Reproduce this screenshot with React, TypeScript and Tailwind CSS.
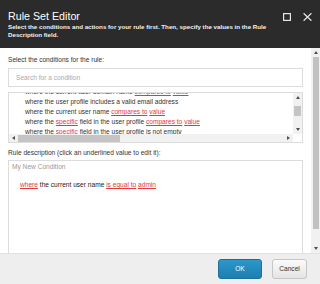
import React from "react";

function Tri({ dir, color = "#505050" }: { dir: "up" | "down" | "left" | "right"; color?: string }) {
  const pts =
    dir === "up" ? "0,3 4,3 2,0" : dir === "down" ? "0,0 4,0 2,3" : dir === "left" ? "3,0 3,4 0,2" : "0,0 0,4 3,2";
  const w = dir === "up" || dir === "down" ? 4 : 3;
  const h = dir === "up" || dir === "down" ? 3 : 4;
  return (
    <svg width={w} height={h} viewBox={`0 0 ${w} ${h}`}>
      <polygon points={pts} fill={color} />
    </svg>
  );
}

function L({ children }: { children: React.ReactNode }) {
  return <span className="text-[#e0393e] underline underline-offset-[1px]">{children}</span>;
}

const items: React.ReactNode[] = [
  <>where the current user domain name <L>compares to</L> <L>value</L></>,
  <>where the user profile includes a valid email address</>,
  <>where the current user name <L>compares to</L> <L>value</L></>,
  <>where the <L>specific</L> field in the user profile <L>compares to</L> <L>value</L></>,
  <>where the <L>specific</L> field in the user profile is not empty</>,
];

export default function App() {
  return (
    <div className="w-[320px] h-[284px] flex flex-col bg-white overflow-hidden font-['Liberation_Sans',Arial,sans-serif]">
      {/* header */}
      <header className="h-[48px] shrink-0 bg-[#2b2b2b] flex pl-[8px]">
        <div className="flex-1 pt-[10px]">
          <div className="text-[10.7px] leading-[13px] text-white">Rule Set Editor</div>
          <div className="text-[6.2px] leading-[8px] font-bold text-[#f2f2f2]">
            Select the conditions and actions for your rule first. Then, specify the values in the Rule Description field.
          </div>
        </div>
        <div className="flex items-start gap-[12px] pt-[13px] pr-[8px]">
          <svg width="8" height="8" viewBox="0 0 8 8">
            <rect x="0.6" y="0.6" width="6.8" height="6.8" fill="none" stroke="#e6e6e6" strokeWidth="1.2" />
          </svg>
          <svg width="9" height="8" viewBox="0 0 9 8">
            <path d="M0.6 0.3 L8.4 7.7 M8.4 0.3 L0.6 7.7" stroke="#e6e6e6" strokeWidth="1.3" />
          </svg>
        </div>
      </header>

      {/* body */}
      <div className="h-[205px] shrink-0 flex">
        <div className="flex-1 min-w-0 pl-[8px] pr-[8px] pt-[7px] overflow-hidden text-[6.6px] text-[#333]">
          <div className="leading-[9px]">Select the conditions for the rule:</div>

          <div className="mt-[4px] h-[19px] border border-[#dcdcdc] flex items-center pl-[7px] text-[#aaa]">
            Search for a condition
          </div>

          {/* condition list */}
          <div className="mt-[5px] h-[51px] border border-[#dcdcdc] flex flex-col">
            <div className="flex-1 min-h-0 flex">
              <div className="flex-1 min-w-0 overflow-hidden pl-[16px]">
                <div className="-mt-[6px] whitespace-nowrap">
                  {items.map((it, i) => (
                    <div key={i} className="leading-[10px] h-[10px]">{it}</div>
                  ))}
                </div>
              </div>
              <div className="w-[9px] bg-[#f1f1f1] flex flex-col items-center">
                <div className="h-[9px] flex items-center justify-center"><Tri dir="up" /></div>
                <div className="h-[4px]" />
                <div className="h-[10px] w-[7px] bg-[#c4c4c4]" />
                <div className="flex-1" />
                <div className="h-[10px] flex items-center justify-center"><Tri dir="down" /></div>
              </div>
            </div>
            <div className="h-[8px] flex">
              <div className="flex-1 bg-[#f1f1f1] flex items-center">
                <div className="w-[9px] flex justify-center"><Tri dir="left" /></div>
                <div className="w-[102px] h-[7px] bg-[#c4c4c4]" />
                <div className="flex-1" />
                <div className="w-[9px] flex justify-center"><Tri dir="right" /></div>
              </div>
              <div className="w-[9px] bg-white" />
            </div>
          </div>

          <div className="mt-[5px] leading-[9px]">Rule description (click an underlined value to edit it):</div>

          {/* description */}
          <div className="mt-[3px] h-[120px] border border-[#dcdcdc] pl-[3px] pt-[1px]">
            <div className="leading-[9px] text-[#999]">My New Condition</div>
            <div className="mt-[9px] ml-[8px] leading-[9px] text-[#222]">
              <L>where</L> the current user name <L>is equal to</L> <L>admin</L>
            </div>
          </div>
        </div>

        {/* outer scrollbar */}
        <div className="w-[9px] bg-[#f1f1f1] flex flex-col pl-[2px] pr-[1px]">
          <div className="h-[9px] flex items-center justify-center"><Tri dir="up" /></div>
          <div className="h-[172px] bg-[#c1c1c1]" />
          <div className="flex-1" />
          <div className="h-[9px] flex items-center justify-center"><Tri dir="down" /></div>
        </div>
      </div>

      {/* footer */}
      <div className="flex-1 bg-[#eeeeee] border-t border-[#e2e2e2] flex items-center justify-end gap-[10px] pr-[13px]">
        <button className="w-[44px] h-[20px] rounded-[3px] border border-[#1b6f98] bg-gradient-to-b from-[#2c97c9] to-[#1d7fb0] text-white text-[6.6px]">
          OK
        </button>
        <button className="w-[35px] h-[20px] rounded-[3px] border border-[#c6c6c6] bg-gradient-to-b from-[#fbfbfb] to-[#e4e4e4] text-[#333] text-[6.6px]">
          Cancel
        </button>
      </div>
    </div>
  );
}
